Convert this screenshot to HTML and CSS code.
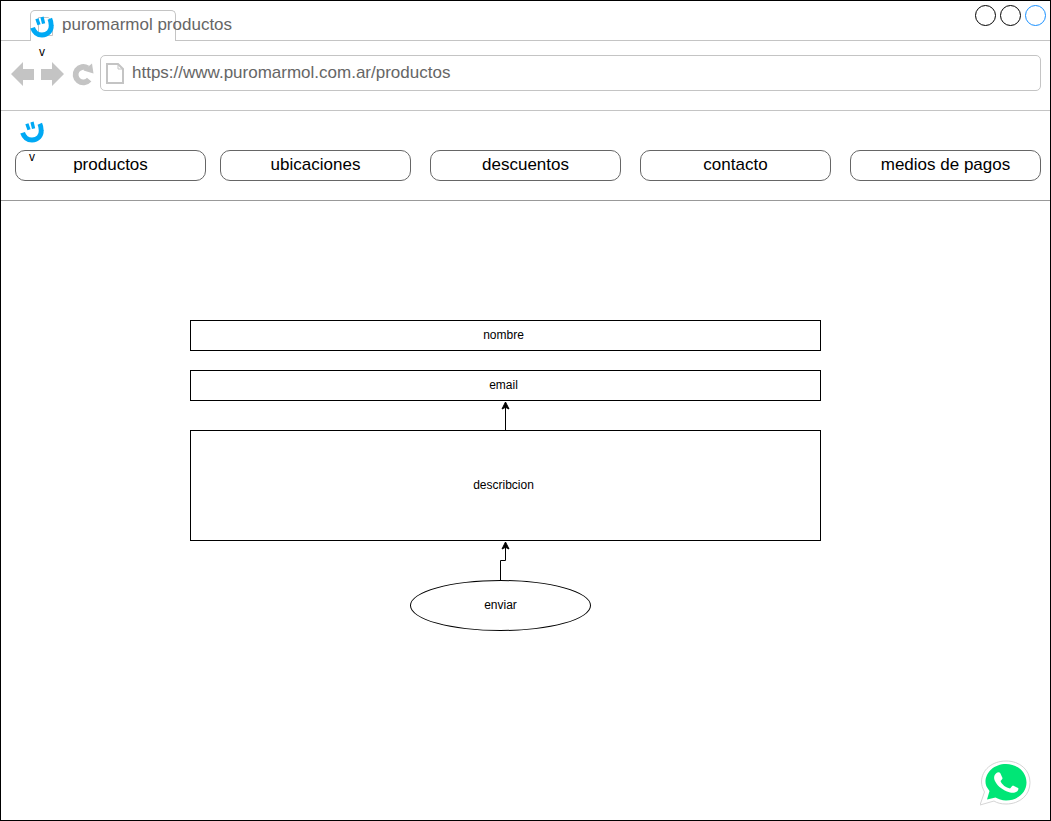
FILE: index.html
```html
<!DOCTYPE html>
<html lang="es">
<head>
<meta charset="utf-8">
<meta name="viewport" content="width=device-width, initial-scale=1">
<title>puromarmol productos</title>
<link rel="stylesheet" href="styles.css">
</head>
<body>
<svg class="defs" aria-hidden="true">
  <symbol id="logo" viewBox="0 0 24 24">
    <path d="M2.600 12.700C4.200 17.600 7.500 20 12 20C18 20 21.500 15.500 21.200 10.500C21.200 7.500 20.600 5.500 19.800 3.800" fill="none" stroke="#00a9f4" stroke-width="4.900"/>
    <path d="M6.900 3.800L9 9.800M12 2L13.600 8.600" fill="none" stroke="#00a9f4" stroke-width="3.300"/>
  </symbol>
</svg>
<div class="window">
  <header class="titlebar">
    <div class="tab">
      <svg class="favicon" viewBox="0 0 16 20" aria-hidden="true"><path d="M.5 18.500V.5H10.500L14.500 5.500V18.500Z" fill="none" stroke="#c4c4c4"/></svg>
      <span class="tab-title">puromarmol productos</span>
      <div class="brand brand-tab"><svg class="logo"><use href="#logo"/></svg><span>v</span></div>
    </div>
    <div class="controls">
      <button class="dot" type="button" aria-label="Minimizar"></button>
      <button class="dot" type="button" aria-label="Maximizar"></button>
      <button class="dot dot-blue" type="button" aria-label="Cerrar"></button>
    </div>
  </header>

  <div class="toolbar">
    <button class="tool" type="button" aria-label="Atrás"><svg viewBox="0 0 24 26"><path d="M0 13L12 1V8H23V19H12V25Z" fill="#c4c4c4"/></svg></button>
    <button class="tool" type="button" aria-label="Adelante"><svg viewBox="0 0 24 26"><path d="M23 13L11 1V8H0V19H11V25Z" fill="#c4c4c4"/></svg></button>
    <button class="tool tool-reload" type="button" aria-label="Recargar"><svg viewBox="0 0 24 26"><path d="M18.200 18.600A7.700 7.700 0 1 1 16.500 7.200" fill="none" stroke="#c4c4c4" stroke-width="5.800"/><path d="M21 2.500L22.500 12.500L12.500 9.500Z" fill="#c4c4c4"/></svg></button>
    <div class="address">
      <svg class="page-icon" viewBox="0 0 18 21" aria-hidden="true"><path d="M1 1H12L17 6V20H1Z" fill="none" stroke="#c4c4c4" stroke-width="2"/><path d="M12 1V6H17" fill="none" stroke="#c4c4c4"/></svg>
      <input class="url" type="text" aria-label="Dirección" value="https://www.puromarmol.com.ar/productos">
    </div>
  </div>

  <nav class="menu">
    <a class="menu-item" href="#">productos</a>
    <a class="menu-item" href="#">ubicaciones</a>
    <a class="menu-item" href="#">descuentos</a>
    <a class="menu-item" href="#">contacto</a>
    <a class="menu-item" href="#">medios de pagos</a>
    <div class="brand brand-menu"><svg class="logo"><use href="#logo"/></svg><span>v</span></div>
  </nav>

  <main class="content">
    <form class="form">
      <input class="field field-name" type="text" placeholder="nombre" aria-label="nombre">
      <input class="field" type="email" placeholder="email" aria-label="email">
      <svg class="arrow" viewBox="0 0 31 29" aria-hidden="true"><path d="M15.500 29V4" fill="none" stroke="#000"/><path d="M15.500 1L19 8L15.500 6.300L12 8Z" stroke="#000"/></svg>
      <textarea class="field field-text" placeholder="describcion" aria-label="describcion"></textarea>
      <svg class="arrow arrow-long" viewBox="0 0 31 39" aria-hidden="true"><path d="M10.500 39V19.500H15.500V4" fill="none" stroke="#000"/><path d="M15.500 1L19 8L15.500 6.300L12 8Z" stroke="#000"/></svg>
      <button class="send" type="button">enviar</button>
    </form>
  </main>

  <a class="whatsapp" href="#" aria-label="WhatsApp">
    <svg viewBox="0 0 52 46"><path d="M0 45L4.500 32C2.500 28 1.500 25 1.500 22C1.500 10 12 1 26 1C40 1 50 10 50 22.500C50 35 40 44 26 44C21 44 17 43 14 41Z" fill="#fff" stroke="#d5d5d5"/><path d="M7 39.500L9.500 31C6.500 27 5.500 25 5.500 22C5.500 12 14.500 4 26 4C37 4 46.500 12 46.500 22.500C46.500 33 37 40.500 26 40.500C22 40.500 18 39 15.500 37.500Z" fill="#00e676"/><path d="M16.500 13C17.500 12 19.500 12 20.200 13L22.500 18C22.700 19 21 20 20.500 21C22 25 26 27.500 30 28.500C31 28 32 25.500 33 25.500L38 28C39 28.500 38 30.500 37 31.500C34 33.500 31 33 27 31.500C21 29 16.500 25 14.500 20C13.500 17 14.500 14.500 16.500 13Z" fill="#fff"/></svg>
  </a>
</div>
</body>
</html>
```
FILE: styles.css
```css
* { box-sizing: border-box; }

body {
  margin: 0;
  background: #fff;
  color: #000;
  font: 12px/16px "Liberation Sans", Arial, sans-serif;
}

button, input, textarea { font: inherit; color: inherit; }
button { padding: 0; background: none; cursor: pointer; }
svg { display: block; }
.defs { position: absolute; width: 0; height: 0; }

.window {
  position: relative;
  display: flex;
  flex-direction: column;
  min-height: 100vh;
  border: 1px solid #000;
}

.titlebar {
  display: flex;
  justify-content: space-between;
  align-items: flex-end;
  height: 40px;
  padding: 0 4px 0 29px;
  border-bottom: 1px solid #c4c4c4;
}

.tab {
  position: relative;
  display: flex;
  align-items: center;
  width: 146px;
  height: 31px;
  margin-bottom: -1px;
  padding: 0 0 2px 31px;
  border: 1px solid #c4c4c4;
  border-bottom: 0;
  border-radius: 5px 5px 0 0;
  background: #fff;
}

.favicon { position: absolute; top: 6px; left: 7px; width: 16px; height: 20px; }
.tab-title { font-size: 17px; line-height: 20px; color: #666; white-space: nowrap; }

.brand {
  position: absolute;
  display: flex;
  flex-direction: column;
  align-items: center;
  gap: 5px;
}
.brand-tab { top: 4px; left: -1px; }
.brand-menu { top: 9px; left: 19px; }
.logo { width: 24px; height: 24px; }

.controls { display: flex; gap: 4px; align-self: flex-start; padding-top: 4px; }
.dot { width: 21px; height: 21px; border: 1px solid #000; border-radius: 50%; }
.dot-blue { border-color: #1890ff; }

.toolbar {
  display: flex;
  align-items: flex-start;
  height: 70px;
  padding: 14px 9px 0 10px;
  border-bottom: 1px solid #c4c4c4;
}
.tool { flex: none; width: 24px; height: 26px; margin: 6px 6px 0 0; border: 0; }
.tool-reload { margin-right: 5px; }

.address {
  flex: 1;
  display: flex;
  align-items: center;
  gap: 8px;
  height: 36px;
  padding-left: 5px;
  border: 1px solid #c4c4c4;
  border-radius: 5px;
}
.page-icon { flex: none; width: 18px; height: 21px; }
.url {
  flex: 1;
  min-width: 0;
  padding: 0;
  border: 0;
  outline: 0;
  background: none;
  color: #666;
  font-size: 17px;
  line-height: 20px;
}

.menu {
  position: relative;
  display: flex;
  gap: 19px;
  height: 90px;
  padding: 39px 9px 19px 14px;
  border-bottom: 1px solid #999;
}
.menu-item {
  flex: 1 1 0;
  height: 31px;
  border: 1px solid #666;
  border-radius: 10px;
  color: #000;
  font-size: 17px;
  line-height: 27px;
  text-align: center;
  text-decoration: none;
  white-space: nowrap;
}
.menu-item:first-child { margin-right: -5px; }

.content { flex: 1; padding: 119px 229px 0 189px; }
.form { display: flex; flex-direction: column; align-items: center; }
.field {
  width: 100%;
  height: 31px;
  padding: 0 4px 2px 0;
  border: 1px solid #000;
  border-radius: 0;
  background: #fff;
  text-align: center;
}
.field::placeholder { color: #000; opacity: 1; }
.field-name { margin-bottom: 19px; }
.field-text { display: block; height: 111px; padding-top: 46px; resize: none; }
.arrow { width: 31px; height: 29px; }
.arrow-long { height: 39px; }
.send {
  width: 181px;
  height: 51px;
  margin-right: 10px;
  padding-bottom: 2px;
  border: 1px solid #000;
  border-radius: 50%;
}

.whatsapp { position: absolute; right: 18px; bottom: 14px; width: 52px; height: 46px; }
```
